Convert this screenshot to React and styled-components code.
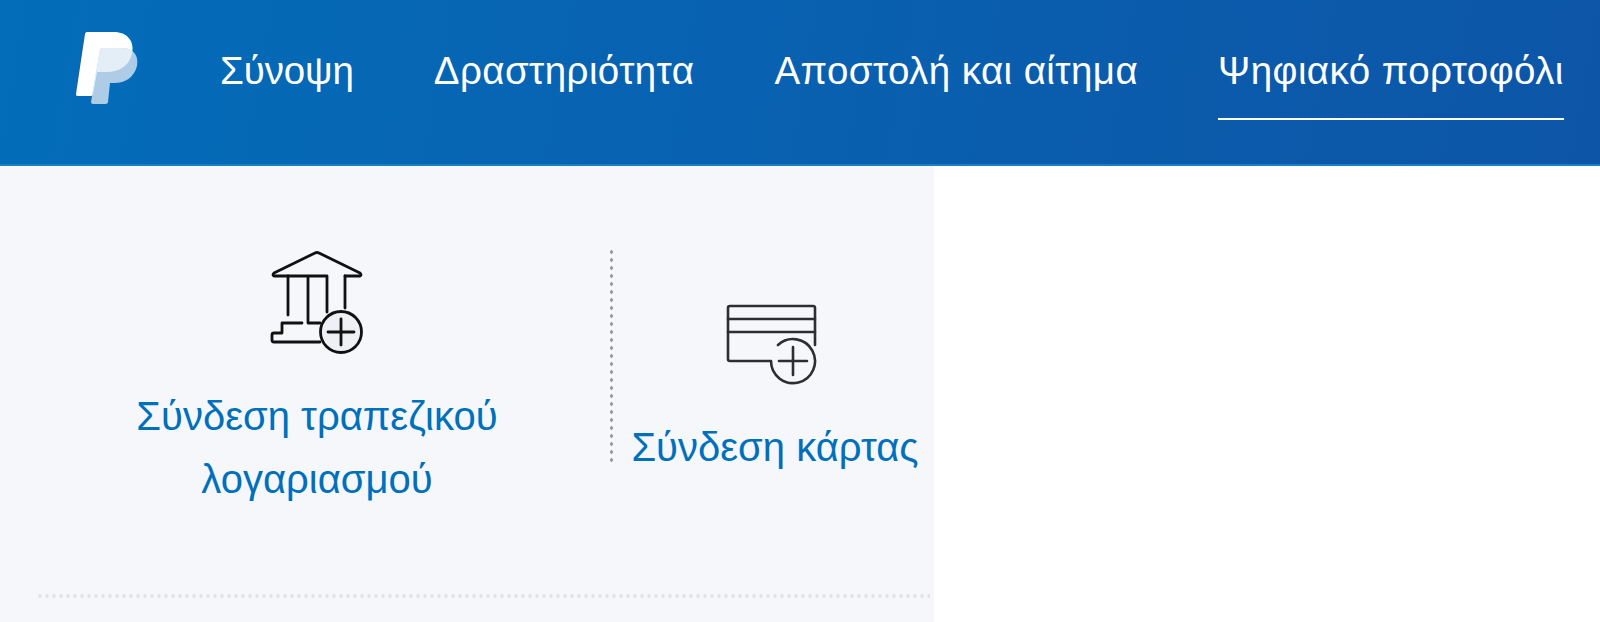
import React from "react"
import styled, { createGlobalStyle } from "styled-components"

const GlobalStyle = createGlobalStyle`
  html, body {
    margin: 0;
    padding: 0;
    background: #fff;
    font-family: "Liberation Sans", Arial, sans-serif;
  }
`

const Header = styled.header`
  display: flex;
  align-items: flex-start;
  height: 164px;
  padding-left: 75px;
  background: linear-gradient(100deg, #036db9 0%, #0a5eae 60%, #0d55a7 100%);
  border-bottom: 2px solid #1a80c6;
`

const Logo = styled.svg`
  display: block;
  width: 64px;
  height: 74px;
  margin-top: 31px;
  margin-right: 81px;
  flex: none;
`

const Nav = styled.nav`
  display: flex;
  gap: 80px;
`

const NavItem = styled.a`
  display: block;
  height: 87px;
  padding-top: 31px;
  font-size: 38.5px;
  line-height: 80px;
  letter-spacing: 0.42px;
  color: #fff;
  white-space: nowrap;
  border-bottom: 2px solid ${(p) => (p.$active ? "#fff" : "transparent")};

  &:first-child {
    letter-spacing: -0.1px;
  }
`

const Panel = styled.section`
  width: 934px;
  height: 456px;
  padding: 84px 4px 0 40px;
  box-sizing: border-box;
  background: #f5f7fa;
`

const Tiles = styled.div`
  display: grid;
  grid-template-columns: 554px 1fr;
  column-gap: 16px;
  align-items: start;
  height: 344px;
`

const Tile = styled.a`
  display: flex;
  flex-direction: column;
  align-items: center;
  color: #0070ba;
  font-size: 40px;
  line-height: 63px;
  text-align: center;
  white-space: nowrap;
`

const DividedTile = styled(Tile)`
  height: 212px;
  padding: 50px 0 0 10px;
  box-sizing: border-box;
  background: radial-gradient(circle, #9a9c9e 1.5px, transparent 1.9px) 0 -2px / 3px 8px repeat-y;
`

const BankIcon = styled.svg`
  display: block;
  flex: none;
  width: 100px;
  height: 110px;
  margin-bottom: 25px;
`

const CardIcon = styled.svg`
  display: block;
  flex: none;
  width: 96px;
  height: 88px;
  margin: 0 5px 28px 0;
`

const Rule = styled.div`
  height: 4px;
  margin-left: -2px;
  background: radial-gradient(circle, #dfe1e4 1.6px, transparent 2px) -1.5px 0 / 7px 4px repeat-x;
`

const navItems = ["Σύνοψη", "Δραστηριότητα", "Αποστολή και αίτημα", "Ψηφιακό πορτοφόλι"]

const frontP = "M87 32H114C127 32 135 41 132 54C129 66 119 72 106 72H97L93 94C93 95 92 96 91 96H78C76 96 76 95 76 94L85 34C85 33 86 32 87 32Z"
const backP = "M103 48H122C133 48 139 55 137 66C134 77 126 83 114 83H110L108 102C108 103 107 104 105 104H93C92 104 91 103 91 102L100 50C100 49 101 48 103 48Z"

const App = () => (
  <>
    <GlobalStyle />
    <Header>
      <Logo viewBox="75 31 64 74">
        <defs>
          <clipPath id="front">
            <path d={frontP} />
          </clipPath>
        </defs>
        <path d={frontP} fill="#fff" />
        <path d={backP} fill="#aecce5" />
        <path d={backP} fill="#e4eef7" clipPath="url(#front)" />
      </Logo>
      <Nav>
        {navItems.map((item, i) => (
          <NavItem key={item} $active={i === navItems.length - 1}>{item}</NavItem>
        ))}
      </Nav>
    </Header>
    <Panel>
      <Tiles>
        <Tile>
          <BankIcon viewBox="267 250 100 110" fill="none" stroke="#111" strokeWidth="2.8" strokeLinecap="round" strokeLinejoin="round">
            <path d="M288 276H274Q272 275 274 273L315 253Q317 252 319 253L360 273Q362 275 360 276H345" />
            <path d="M288 276H327Q327 276 327 278V312M288 276V315M308 276V323H320M345 276V308" />
            <path d="M302 323H282V333H274Q272 333 272 335V340Q272 342 274 342H320" />
            <circle cx="341" cy="332" r="20.5" fill="#eef0f3" />
            <path d="M341 319V345M328 332H354" />
          </BankIcon>
          Σύνδεση τραπεζικού<br />λογαριασμού
        </Tile>
        <DividedTile>
          <CardIcon viewBox="725 300 96 88" fill="none" stroke="#2c2e2f" strokeWidth="2.6" strokeLinecap="round" strokeLinejoin="round">
            <path d="M815 345V308Q815 306 813 306H730Q728 306 728 308V359Q728 361 730 361H771A22 22 0 1 0 778 345" />
            <path d="M728 319H815M728 332H815" />
            <path d="M793 347V375M779 361H807" />
          </CardIcon>
          Σύνδεση κάρτας
        </DividedTile>
      </Tiles>
      <Rule />
    </Panel>
  </>
)

export default App
